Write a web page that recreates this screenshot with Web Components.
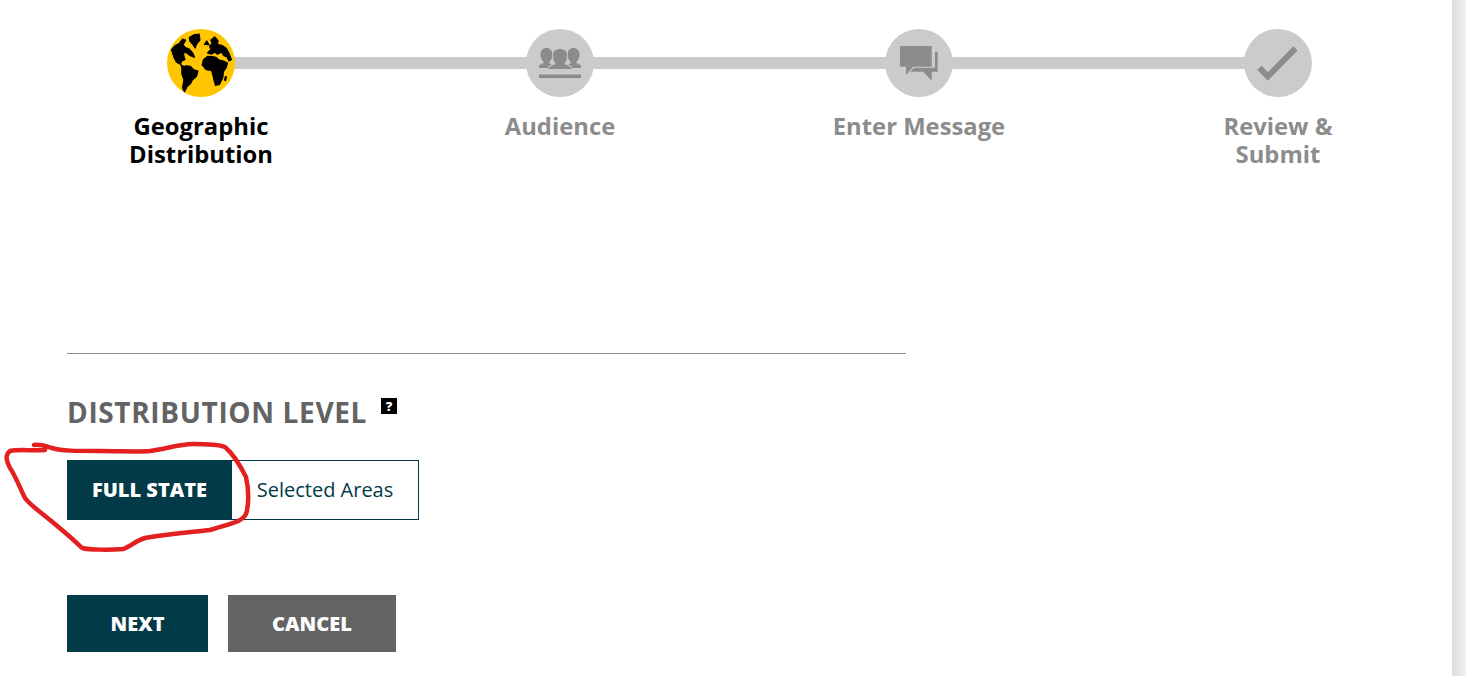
<!DOCTYPE html>
<html lang="en">
<head>
<meta charset="utf-8">
<title>Distribution</title>
<style>
  html, body { margin: 0; padding: 0; height: 100%; overflow: hidden; background: #fff; }
  body { font-family: "Open Sans", "Liberation Sans", sans-serif; }
</style>
</head>
<body>
<template id="step-tpl">
  <style>
    :host { display: flex; flex-direction: column; align-items: center; width: 180px; position: relative; z-index: 1; }
    .dot { width: 68px; height: 68px; border-radius: 50%; background: #cbcbcb; display: flex; align-items: center; justify-content: center; overflow: hidden; }
    .label { margin-top: 15px; font-size: 23.8px; line-height: 28px; font-weight: 700; text-align: center; color: #8c8c8c; }
    :host([active]) .dot { background: #ffc600; }
    :host([active]) .label { color: #000; }
    ::slotted(svg) { display: block; }
  </style>
  <div class="dot"><slot name="icon"></slot></div>
  <div class="label"><slot></slot></div>
</template>

<template id="bar-tpl">
  <style>
    :host { display: flex; justify-content: space-between; position: relative; padding: 29px 0 0 111px; width: 1368px; box-sizing: border-box; height: 353px; }
    .track { position: absolute; left: 201px; width: 1077px; top: 57px; height: 12px; background: #cbcbcb; }
  </style>
  <div class="track"></div>
  <slot></slot>
</template>

<template id="seg-tpl">
  <style>
    :host { display: flex; align-items: stretch; width: 352px; height: 60px; position: relative; }
    .on { width: 165px; background: #033a47; color: #fff; font-weight: 800; font-size: 20px; display: flex; align-items: center; justify-content: center; padding-bottom: 2px; box-sizing: border-box; }
    .off { flex: 1; border: 1px solid #033a47; border-left: 0; color: #033a47; font-size: 20px; display: flex; align-items: center; justify-content: center; padding-bottom: 2px; box-sizing: border-box; }
  </style>
  <div class="on"><slot name="on"></slot></div>
  <div class="off"><slot name="off"></slot></div>
</template>

<template id="btn-tpl">
  <style>
    :host { display: flex; align-items: center; justify-content: center; height: 57px; background: #033a47; color: #fff; font-weight: 800; font-size: 20px; }
    :host([variant="grey"]) { background: #636363; }
  </style>
  <slot></slot>
</template>

<template id="head-tpl">
  <style>
    :host { display: flex; align-items: flex-start; color: #636363; font-weight: 700; font-size: 28px; line-height: 37px; letter-spacing: 0.65px; }
    .q { width: 16px; height: 16px; margin: 4px 0 0 14px; background: #000; color: #fff; font-size: 13px; font-weight: 800; line-height: 16px; text-align: center; letter-spacing: 0; }
  </style>
  <slot></slot><span class="q">?</span>
</template>

<template id="page-tpl">
  <style>
    :host { display: block; position: relative; height: 676px; width: 1466px; overflow: hidden; background: #fff; }
    .main { padding-left: 67px; }
    hr { width: 839px; height: 1px; background: #8c8c8c; border: 0; margin: 0 0 40px 0; }
    .actions { display: flex; gap: 20px; margin-top: 75px; }
    .scroll { position: absolute; right: 0; top: 0; bottom: 0; width: 14px; background: linear-gradient(90deg, #dcdcdc, #f1f1f1); }
    .mark { position: absolute; left: 0; top: 0; pointer-events: none; }
    .field { margin-top: 29px; }
  </style>
  <slot name="bar"></slot>
  <div class="main">
    <hr>
    <slot name="head"></slot>
    <div class="field"><slot name="seg"></slot></div>
    <div class="actions"><slot name="actions"></slot></div>
  </div>
  <div class="scroll"></div>
  <svg class="mark" width="1466" height="676" viewBox="0 0 1466 676" fill="none">
    <path d="M34 445 C40 444 45 446 52 448 C62 451 75 451 100 451 C120 451 140 452 150 451 C165 449 180 444 193 444 C205 444 220 445 225 447 C232 453 240 465 246 477 C249 490 249 505 246 514 C242 522 232 523 210 530 C195 532 175 533 145 538 C135 541 130 547 123 549 C110 550 90 550 82 548 C72 538 62 530 50 520 C38 510 30 505 25 498 C20 488 15 475 10 468 C6 460 5 455 10 451 C20 449 30 451 45 450" stroke="#e3201f" stroke-width="4.500" stroke-linecap="round" stroke-linejoin="round"/>
  </svg>
</template>

<dist-page>
  <step-bar slot="bar">
    <step-item active>
      <svg slot="icon" width="68" height="68" viewBox="142 57 202 202">
        <g fill="#000" stroke="#000" stroke-width="3" stroke-linejoin="round">
          <path d="M155 118 L166 106 L178 100 L188 87 L198 90 L190 104 L197 112 L208 116 L220 130 L224 142 L210 136 L200 128 L192 126 L192 136 L196 148 L186 152 L182 162 L170 156 L162 140 Z"/>
          <path d="M208 82 L222 74 L238 72 L240 90 L230 102 L226 114 L218 102 L210 94 Z"/>
          <path d="M182 162 L192 168 L186 172 Z"/>
          <path d="M186 172 L198 166 L212 168 L222 178 L234 182 L230 198 L218 208 L212 220 L202 228 L194 244 L188 232 L192 208 L186 192 Z"/>
          <path d="M253 103 L260 92 L267 104 Z"/>
          <path d="M262 128 L272 118 L268 108 L276 100 L272 90 L284 80 L294 92 L292 102 L306 106 L318 114 L326 128 L334 148 L326 152 L320 140 L310 136 L304 126 L292 132 L284 126 L274 132 Z"/>
          <path d="M246 164 L250 148 L262 138 L276 139 L288 141 L296 148 L310 152 L322 158 L318 172 L310 184 L308 202 L298 222 L286 225 L282 212 L278 194 L274 180 L258 178 Z"/>
          <path d="M315 198 L319 199 L316 211 L313 209 Z"/>
        </g>
      </svg>
      Geographic Distribution
    </step-item>
    <step-item>
      <svg slot="icon" width="42" height="30" viewBox="0 0 42 30">
        <g fill="#8c8c8c" stroke="#cbcbcb" stroke-width="1">
          <path d="M0 20 V17.500 L5 14.500 C3 12.500 1.500 10 1.500 6.500 C1.500 2.500 4 0 7.500 0 C11 0 13.500 2.500 13.500 6.500 C13.500 10 12 12.500 10 14.500 L16 20 Z" stroke="none"/>
          <path d="M42 20 V17.500 L37 14.500 C39 12.500 40.500 10 40.500 6.500 C40.500 2.500 38 0 34.500 0 C31 0 28.500 2.500 28.500 6.500 C28.500 10 30 12.500 32 14.500 L26 20 Z" stroke="none"/>
          <path d="M9 21.500 V19.500 L16 15.500 C14 13.500 13.500 10.500 13.500 7.500 C13.500 3.500 16.500 .5 21 .5 C25.500 .5 28.500 3.500 28.500 7.500 C28.500 10.500 28 13.500 26 15.500 L33 19.500 V21.500 Z"/>
          <rect x="0" y="26.500" width="42" height="3.500" stroke="none"/>
        </g>
      </svg>
      Audience
    </step-item>
    <step-item>
      <svg slot="icon" width="38" height="35" viewBox="0 0 38 35">
        <path d="M35 5.700 H37.700 V25.700 H31.700 V34.700 L23.300 25.700 H10 L14.300 21.700 H35 Z" fill="#8c8c8c"/>
        <path d="M0 0 H31.700 V20.700 H13 L6 29 V20.700 H0 Z" fill="#8c8c8c"/>
      </svg>
      Enter Message
    </step-item>
    <step-item>
      <svg slot="icon" width="68" height="68" viewBox="0 0 68 68">
        <path d="M15.500 38.700 L23.800 47.500 L51.500 19.300" fill="none" stroke="#8c8c8c" stroke-width="6"/>
      </svg>
      Review &amp; Submit
    </step-item>
  </step-bar>
  <section-head slot="head">DISTRIBUTION LEVEL</section-head>
  <seg-toggle slot="seg">
    <span slot="on">FULL STATE</span>
    <span slot="off">Selected Areas</span>
  </seg-toggle>
  <flat-button slot="actions" style="width:141px">NEXT</flat-button>
  <flat-button slot="actions" variant="grey" style="width:168px">CANCEL</flat-button>
</dist-page>

<script>
  function define(name, tpl) {
    customElements.define(name, class extends HTMLElement {
      constructor() {
        super();
        this.attachShadow({ mode: "open" }).appendChild(document.getElementById(tpl).content.cloneNode(true));
      }
    });
  }
  define("step-item", "step-tpl");
  define("step-bar", "bar-tpl");
  define("seg-toggle", "seg-tpl");
  define("flat-button", "btn-tpl");
  define("section-head", "head-tpl");
  define("dist-page", "page-tpl");
</script>
</body>
</html>
